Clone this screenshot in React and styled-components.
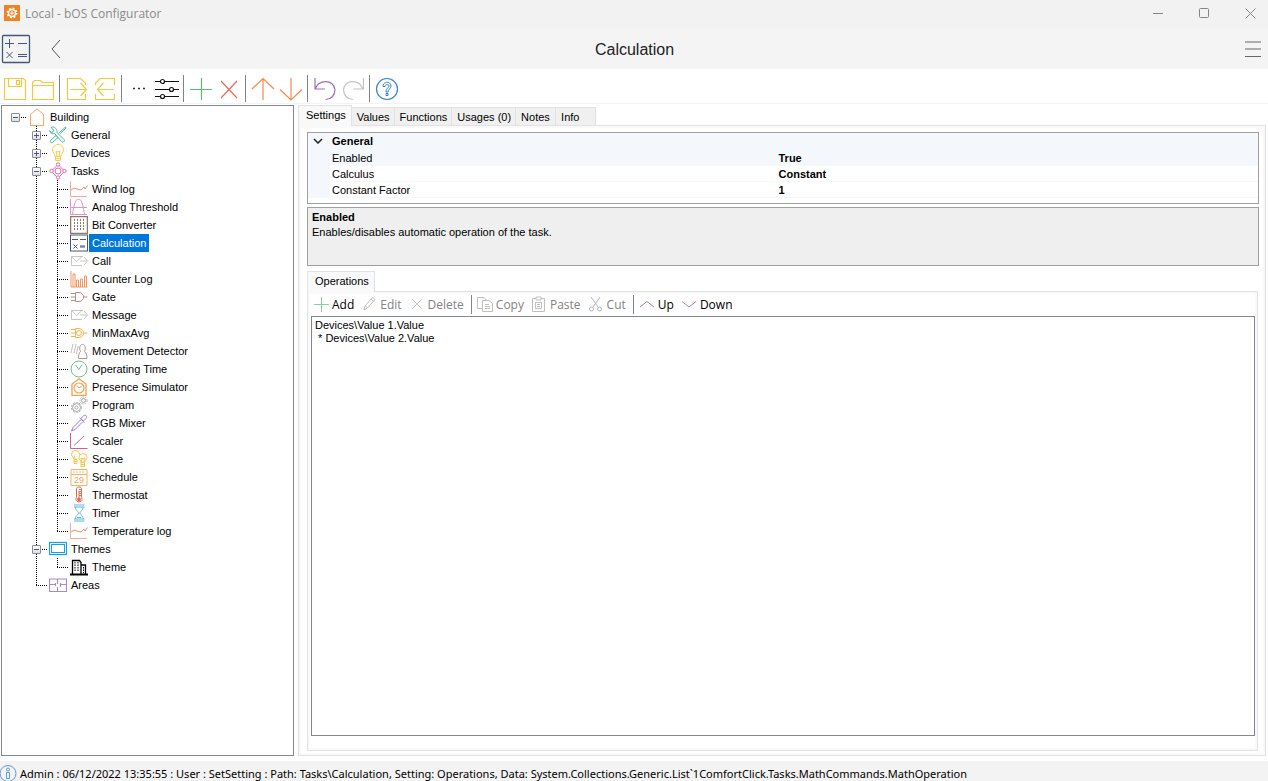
import React from 'react';
import styled, { createGlobalStyle } from 'styled-components';

const sans = '"Liberation Sans", Arial, sans-serif';
const ui = '"Open Sans", "Segoe UI", sans-serif';

const GlobalStyle = createGlobalStyle`
    * {
        box-sizing: border-box;
    }

    body {
        margin: 0;
        background: #fff;
        color: #000;
        font-family: ${sans};
        font-size: 11px;
    }

    button {
        border: 0;
        padding: 0;
        background: none;
        color: inherit;
        font: inherit;
    }

    ul {
        list-style: none;
        margin: 0;
        padding: 0;
    }
`

const Window = styled.div`
    height: 100vh;
    display: flex;
    flex-direction: column;
    overflow: hidden;
`

const TitleBar = styled.div`
    flex: none;
    height: 29px;
    padding: 0 0 3px 4px;
    display: flex;
    align-items: center;
    background: #f2f2f2;
    color: #8a8a8a;
    font-family: ${ui};
    font-size: 12px;
`

const AppName = styled.span`
    flex: 1;
    padding-left: 5px;
`

const WindowButton = styled.button`
    width: 46px;
    height: 26px;
    display: flex;
    align-items: center;
    justify-content: center;
`

const WindowButtons = styled.div`
    display: flex;
    margin-right: -5px;
`

const Header = styled.header`
    flex: none;
    height: 40px;
    padding: 0 0 0 1px;
    display: grid;
    grid-template-columns: 1fr auto 1fr;
    align-items: center;
    background: #f4f4f4;
`

const HeaderSide = styled.div`
    display: flex;
    align-items: center;
    gap: 17px;
    padding-right: 7px;
    justify-content: ${props => props.$end ? 'flex-end' : 'flex-start'};

    button {
        display: flex;
    }
`

const Title = styled.h1`
    margin: 0;
    padding-top: 2px;
    font-size: 16px;
    font-weight: normal;
    color: #222;
`

const Toolbar = styled.div`
    flex: none;
    height: 35px;
    padding: 6px 0 0 1px;
    display: flex;
    border-bottom: 1px solid #f3f3f3;
`

const ToolButton = styled.button`
    width: 28px;
    height: 28px;
    display: flex;
    align-items: center;
    justify-content: center;
`

const Separator = styled.span`
    width: 1px;
    height: ${props => props.$small ? '19px' : '27px'};
    margin: ${props => props.$small ? '0 5px 0 0' : '0 3px 0 2px'};
    background: #80838a;
`

const Main = styled.main`
    flex: 1;
    min-height: 0;
    padding: 1px 2px 5px 1px;
    display: flex;
    gap: 4px;
`

const TreePanel = styled.nav`
    flex: none;
    width: 293px;
    padding: 2px 3px;
    border: 1px solid #828790;
    overflow: hidden;
`

const TreeRow = styled.div`
    height: 18px;
    display: flex;
    align-items: stretch;
    cursor: default;

    svg {
        flex: none;
        margin: 0 1px 0 2px;
    }
`

const dotsDown = 'repeating-linear-gradient(180deg, #000 0 1px, transparent 1px 2px)';
const dotsAcross = 'repeating-linear-gradient(90deg, #000 0 1px, transparent 1px 2px)';

const down = {
    full: `${dotsDown} 10px 0 / 1px 18px no-repeat`,
    half: `${dotsDown} 10px 0 / 1px 10px no-repeat`,
}

const Guide = styled.span`
    flex: none;
    width: 21px;
    padding: 5px 0 0 6px;
    background: ${props => [
        props.$down && down[props.$down],
        props.$across && `${dotsAcross} 10px 9px / 11px 1px no-repeat`,
    ].filter(Boolean).join(', ') || 'none'};
`

const Expander = styled.button`
    width: 9px;
    height: 9px;
    display: block;
    border: 1px solid #8c8c8c;
    border-radius: 1px;
    background:
        linear-gradient(#3a56b0, #3a56b0) center / 5px 1px no-repeat,
        ${props => props.$open ? '' : 'linear-gradient(#3a56b0, #3a56b0) center / 1px 5px no-repeat,'}
        linear-gradient(#fff, #dedede);
`

const TreeLabel = styled.span`
    padding: 0 3px;
    line-height: 18px;
    white-space: nowrap;
    background: ${props => props.$selected ? '#0078d7' : 'none'};
    color: ${props => props.$selected ? '#fff' : '#000'};
`

const Content = styled.section`
    flex: 1;
    min-width: 0;
    display: flex;
    flex-direction: column;
`

const Tabs = styled.div`
    flex: none;
    display: flex;
    align-items: flex-end;
    height: 20px;
`

const Tab = styled.button`
    height: ${props => props.$active ? '21px' : '18px'};
    min-width: 40px;
    margin-bottom: ${props => props.$active ? '-1px' : '0'};
    padding: ${props => props.$active ? '0 5px 2px 7px' : '0 4px 0 5px'};
    border: 1px solid #e2e2e2;
    border-bottom: 0;
    border-left-width: ${props => props.$active ? '1px' : '0'};
    background: ${props => props.$active ? '#f9f9f9' : '#f0f0f0'};
    position: relative;
    text-align: left;
    white-space: nowrap;
`

const TabPage = styled.div`
    flex: 1;
    min-height: 0;
    padding: 6px 6px 4px 8px;
    display: flex;
    flex-direction: column;
    border: 1px solid #e2e2e2;
    box-shadow: inset 0 0 0 2px #f9f9f9;
`

const PropertyBox = styled.div`
    flex: none;
    height: 72px;
    border: 1px solid #a0a0a0;
`

const PropertyTable = styled.table`
    width: 100%;
    table-layout: fixed;
    border-collapse: collapse;

    td,
    th {
        height: 16px;
        padding: 1px 2px 0;
        line-height: 14px;
        text-align: left;
        border-bottom: 1px solid #f4f7fc;
    }

    th {
        font-weight: normal;
    }

    td:last-child {
        font-weight: bold;
    }
`

const PropertyRow = styled.tr`
    background: ${props => props.$shaded ? '#f4f7fc' : '#fff'};

    td:first-child {
        background: #f4f7fc;
    }
`

const Category = styled.th`
    && {
        font-weight: bold;
    }
`

const Fold = styled.button`
    width: 15px;
    height: 14px;
    display: flex;
    align-items: center;
    justify-content: center;
`

const Help = styled.div`
    flex: none;
    height: 59px;
    margin: 3px 0 5px;
    padding: 2px 4px;
    border: 1px solid #a0a0a0;
    background: #efefef;
    line-height: 15px;
`

const SubPage = styled.div`
    flex: 1;
    min-height: 0;
    margin-right: 1px;
    padding: 1px 2px 14px 3px;
    display: flex;
    flex-direction: column;
    border: 1px solid #e2e2e2;
    box-shadow: inset 0 0 0 2px #fafafa;
`

const Commands = styled.div`
    flex: none;
    height: 23px;
    padding: 1px 0 2px 2px;
    display: flex;
    align-items: center;
    font-family: ${ui};
    font-size: 12px;
`

const Command = styled.button`
    height: 19px;
    margin-right: 7px;
    display: flex;
    align-items: center;
    gap: 3px;
    white-space: nowrap;
    color: ${props => props.disabled ? '#838383' : '#000'};
`

const Operations = styled.ul`
    flex: 1;
    min-height: 0;
    border: 1px solid #828790;
    overflow: auto;
    background: #fff;

    li {
        padding: 0 3px;
        line-height: 13px;
        white-space: pre;
    }

    li:first-child {
        padding-top: 2px;
    }
`

const StatusBar = styled.footer`
    flex: none;
    height: 20px;
    padding-top: 3px;
    display: flex;
    gap: 3px;
    background: #f3f3f3;
    font-family: "Noto Sans", "Segoe UI", sans-serif;
    font-size: 11px;
    line-height: 19px;
    white-space: nowrap;
    overflow: hidden;

    svg {
        flex: none;
    }
`

const glyphs = {
    building: ['#f3ab5c', <path d="M2.500 17.500V6.500L9 .8l6.500 5.700v11z" />],
    tools: ['#4cb892', <path d="M2 1.500 4.500 4l-.5 2-2 .5L.8 4.500C.8 7 3 8.500 5.500 7.500l7 8c1.500 1.800 4-.3 2.500-2L8 6.500C8.500 3.500 6 .8 3.500 1zM16.500 1l-6 5.500 1 1L17 2zM7 9.500l-5.500 5c-1 1 .8 3 2 2L9 11.500z" />],
    bulb: ['#f7cd4f', <path d="M6 12.500c0-3-2.500-3.500-2.500-6.500a5.500 5.500 0 0 1 11 0c0 3-2.500 3.500-2.500 6.500zM6 14.500h6M6.500 12.500v4h5v-4M8 12 7 7l2 1 2-1-1 5" />],
    tasks: ['#e868a8', <><circle cx="9" cy="9" r="3" /><circle cx="9" cy="2.500" r="1.700" /><circle cx="9" cy="15.500" r="1.700" /><circle cx="2.500" cy="9" r="1.700" /><circle cx="15.500" cy="9" r="1.700" /><path d="m7.500 4-4 4M10.500 4l4 4M3.500 10.500l4 4M14.500 10.500l-4 4" /></>],
    log: ['#ee8a80', <><path d="M.5 1v15.500H17" stroke="#f3aaa0" /><path d="m1 10 3-2 3 1 4 1 3-3 1 2 2.500-3.500" /></>],
    analog: ['#dd94c8', <path d="M.5 1v15.500H17M.5 9.500H17M2.500 16C5 1 6.500 1.500 8.500 1.500S12 1 14.500 16" />],
    bits: ['#92796a', <><rect x=".5" y=".5" width="17" height="17" strokeWidth="1.500" /><path d="M4.500 3v12M7.500 3v12M10.500 3v12M13.500 3v12" strokeDasharray="2 1" /></>],
    calc: ['#46567c', <><rect x=".5" y="1" width="17" height="16" /><path d="M2 5.500h6M10 5.500h6M10 12h5M10 13h5M3.500 10.500l4 4M7.500 10.500l-4 4" /></>],
    mail: ['#c6c6c6', <path d="M12 13.500H1.500v-9H13M1.500 4.500l5 5 5.500-5M10 9h7M14 5l3.500 4-3.500 4" />],
    counter: ['#f2955f', <path d="M1 1v16h16.500M3 17V4h2v13M6.500 17v-7h2v7M10.500 17V9h2v8M14.500 17V6h2v11" />],
    gate: ['#bb8a84', <path d="M5.500 4.500h3.500c6 0 6 9 0 9H5.500zM1 5.500h4.500M1 9h4.500M1 12.500h4.500M13.500 9h4" />],
    minmax: ['#f4b54e', <><path d="M5.500 4.500h3.500c6 0 6 9 0 9H5.500zM1 5.500h4.500M1 9h4.500M1 12.500h4.500M13.500 9h4" /><circle cx="9" cy="9" r="2.500" /></>],
    motion: ['#a89b94', <><path d="M8.500 16.500c0-4 .5-5.500 2-7-1.500-3-1-7 2-7s3.500 4 2 7c1.500 1.500 2.500 3 2.500 7z" /><path d="m1 11 2-9M4 11l2-9M6.500 12 8 4" stroke="#c4bcb6" /></>],
    clock: ['#72c08c', <><circle cx="9" cy="9" r="8" /><path d="M5.500 5 9 9.500l3-5" /></>],
    presence: ['#f2a04c', <><path d="M2 17.500V6l7-5.200L16 6v11.500z" strokeWidth="1.300" /><circle cx="9" cy="10" r="5" strokeWidth="1.200" /><path d="m7 7.500 2 2.500 3-2" /></>],
    gears: ['#a8a8a8', <><circle cx="6.500" cy="11.500" r="5" strokeDasharray="2 1.200" /><circle cx="6.500" cy="11.500" r="4" /><circle cx="6.500" cy="11.500" r="1.500" /><circle cx="13.500" cy="4.500" r="3.500" strokeDasharray="1.500 1" /><circle cx="13.500" cy="4.500" r="2" /></>],
    dropper: ['#9a7bc8', <path d="M11 4.500c2-2.500 3.500-4 5-3s0 3.500-2.500 5.500zM9.500 4l5 4.500M10.500 6 3 13.500 1.500 17l3.500-1.500L12.500 8" />],
    scaler: ['#dd5c90', <><path d="M.5 1v15.500h17" /><path d="M4 13.500 14 4" /></>],
    scene: ['#f7c545', <path d="M4 9.500C4 7.500 1.500 6.500 1.500 4.500a4 4 0 0 1 8 0M4 9.500h3v4H4zM4 11.500h3M5 9 4.500 5.500M11 12.500c0-2-2-3-2-5a4 4 0 0 1 8 0c0 2-2.500 3-2.500 5zM11 12.500v4h3.500v-4M11 14.500h3.500M12 12l-1-4 2 1 2-1-1 4" />],
    calendar: ['#f4b468', <><path d="M1 1.500h16v16H1zM1 6.500h16" /><path d="M3 4h11" strokeDasharray="2 1" /><text x="4" y="15" fontSize="9" fill="#f4a458" stroke="none" fontFamily="Liberation Sans">29</text></>],
    thermo: ['#e06a50', <><path d="M6.500 11V2.500c0-2 5-2 5 0V11c3 6.500-8 6.500-5 0z" /><path d="M9 5v9M11 3.500H9M11 5.500H9M11 7.500H9M11 9.500H9" /><circle cx="9" cy="13.500" r="1.500" fill="#e06a50" /></>],
    timer: ['#56b8e0', <path d="M4 1h10.500M4 3h10.500M4 15h10.500M4 17h10.500M5.500 3c0 4 3 4 3 6s-3 2-3 6M13 3c0 4-3 4-3 6s3 2 3 6M7 13.500h4" />],
    themes: ['#1ba0e0', <><rect x=".5" y="2.500" width="17" height="12" strokeWidth="1.300" /><rect x="2.500" y="4.500" width="13" height="8" /></>],
    city: ['#000', <><path d="M2.500 16V2.500h7l1.500 2V16M11 7h4.500v9" strokeWidth="1.300" /><path d="M0 16.500h18" strokeWidth="2" /><path d="M5 4v10M8 4v10M13.500 9v6" strokeDasharray="1.500 1" /></>],
    areas: ['#a48cc8', <path d="M.5 3v12.500h17V3zM.5 8.500h6M8.500 3v5M8.500 11v4.500M11.500 8.500h6M11.500 7v4M6.500 7v3" strokeWidth="1.200" />],
}

const Glyph = ({ name }) => {
    const [color, shape] = glyphs[name];
    return (
        <svg width="18" height="18" viewBox="0 0 18 18" fill="none" stroke={color} aria-hidden="true">{shape}</svg>
    )
}

const tools = [
    ['Save', '#f5c742', <path d="M1.500 1.500h19l2 2v19h-21zM5.500 1.500v8h13v-8M13.500 3.500h3v4h-3z" />],
    ['Open', '#f5c742', <path d="M1.500 22.500v-17l2-2h6l2 2h11v17zM1.500 8.500h21" />],
    null,
    ['Export', '#f5c742', <path d="M20.500 8V6l-5-4.500h-13v21h18V17M5 12.500h16M15.500 6l6 6.500-6 6.500" />],
    ['Import', '#f5c742', <path d="M21.500 8V1.500H7L2.500 6v2M2.500 17v5.500h19V17M21 12.500H5M10.500 6l-6 6.500 6 6.500" />],
    null,
    ['More', '#333', <path d="M6 11.500h2M11 11.500h2M16 11.500h2" strokeWidth="1.500" />],
    ['Options', '#111', <path d="M0 4.500h5M10 4.500h14M0 12.500h14M19 12.500h5M0 19.500h5M10 19.500h14M5.500 4.500a2 2 0 1 0 4 0 2 2 0 1 0-4 0M14.500 12.500a2 2 0 1 0 4 0 2 2 0 1 0-4 0M5.500 19.500a2 2 0 1 0 4 0 2 2 0 1 0-4 0" />],
    null,
    ['Add', '#5cba72', <path d="M1 12.500h22M12.500 1v22" />],
    ['Delete', '#ea6a55', <path d="m4 4 16 17M20 4 4 21" />],
    null,
    ['Move up', '#f28a4c', <path d="M12 23V2M1 12 12 1.500 23 12" />],
    ['Move down', '#f28a4c', <path d="M12 1v21M1 12.500 12 23l11-10.500" />],
    null,
    ['Undo', '#9b6fc0', <path d="M2 1v11h10M2 12C6 2 20 2 22 12.500c0 6-4 10-9.500 10" />],
    ['Redo', '#c4c4c4', <path d="M22.500 1v11h-10M22 12C18 2 4 2 2.500 12.500c0 6 4 10 9.500 10" />],
    null,
    ['Help', '#2f86c8', <><circle cx="12" cy="12" r="10.500" /><path d="M8 9.500C8 4 16 4 16 9c0 3-3 3-3 6h-2c0-4 3-4 3-6s-4-2-4 .5zM11 16.500h2v2h-2z" strokeWidth="1" /></>],
]

const tree = [
    { depth: 0, icon: 'building', label: 'Building', open: true },
    { depth: 1, icon: 'tools', label: 'General', open: false },
    { depth: 1, icon: 'bulb', label: 'Devices', open: false },
    { depth: 1, icon: 'tasks', label: 'Tasks', open: true },
    { depth: 2, icon: 'log', label: 'Wind log' },
    { depth: 2, icon: 'analog', label: 'Analog Threshold' },
    { depth: 2, icon: 'bits', label: 'Bit Converter' },
    { depth: 2, icon: 'calc', label: 'Calculation', selected: true },
    { depth: 2, icon: 'mail', label: 'Call' },
    { depth: 2, icon: 'counter', label: 'Counter Log' },
    { depth: 2, icon: 'gate', label: 'Gate' },
    { depth: 2, icon: 'mail', label: 'Message' },
    { depth: 2, icon: 'minmax', label: 'MinMaxAvg' },
    { depth: 2, icon: 'motion', label: 'Movement Detector' },
    { depth: 2, icon: 'clock', label: 'Operating Time' },
    { depth: 2, icon: 'presence', label: 'Presence Simulator' },
    { depth: 2, icon: 'gears', label: 'Program' },
    { depth: 2, icon: 'dropper', label: 'RGB Mixer' },
    { depth: 2, icon: 'scaler', label: 'Scaler' },
    { depth: 2, icon: 'scene', label: 'Scene' },
    { depth: 2, icon: 'calendar', label: 'Schedule' },
    { depth: 2, icon: 'thermo', label: 'Thermostat' },
    { depth: 2, icon: 'timer', label: 'Timer' },
    { depth: 2, icon: 'log', label: 'Temperature log', last: true },
    { depth: 1, icon: 'themes', label: 'Themes', open: true },
    { depth: 2, icon: 'city', label: 'Theme', last: true },
    { depth: 1, icon: 'areas', label: 'Areas', last: true },
]

const commands = [
    ['Add', '#86cf96', <path d="M1 8.500h15M8.500 1v15" />, true],
    ['Edit', '#bdbdbd', <path d="m3 14 1-4 7.500-8.500 2.500 2L6.500 12zM4.500 10l2 2M10 3l2.500 2.500" />],
    ['Delete', '#c4c4c4', <path d="m3 3 10 10M13 3 3 13" />],
    null,
    ['Copy', '#c0c0c0', <path d="M5 12.500H.5v-11H7l2.500 2.500M5.500 4.500H12l3.500 3v8h-10zM8 8.500h4M8 10.500h5M8 12.500h5" />],
    ['Paste', '#c0c0c0', <path d="M5 2.500H1.500v13h12v-13H10M5 1h5v3H5zM4.500 6.500h6v6h-6zM6 8.500h3M6 10.500h3" />],
    ['Cut', '#b4b4b4', <><path d="m3 1 7 10M12 1 5 11" /><circle cx="3.500" cy="13" r="2" /><circle cx="11.500" cy="13" r="2" /></>],
    null,
    ['Up', '#a583c6', <path d="m1 11 7-5.500 7 5.500" />, true],
    ['Down', '#a583c6', <path d="m1 5.500 7 5.500 7-5.500" />, true],
]

const TreeItem = ({ item }) => {
    const expandable = item.open !== undefined;
    let elbow = null;
    if (item.depth > 0){
        elbow = item.last ? 'half' : 'full';
    }

    return (
        <TreeRow role="treeitem" aria-selected={!!item.selected}>
            {item.depth > 0 && <Guide />}
            {item.depth > 1 && <Guide $down="full" />}
            <Guide $down={elbow} $across>
                {expandable && <Expander $open={item.open} aria-label={`Toggle ${item.label}`} />}
            </Guide>
            <Glyph name={item.icon} />
            <TreeLabel $selected={item.selected}>{item.label}</TreeLabel>
        </TreeRow>
    )
}

const App = () => (
    <Window>
        <GlobalStyle />
        <TitleBar>
            <svg width="16" height="16" viewBox="0 0 16 16" aria-hidden="true">
                <rect width="16" height="16" fill="#ee8322" />
                <g fill="none" stroke="#fff">
                    <circle cx="8" cy="8" r="4.500" strokeDasharray="1.800 1.730" strokeWidth="2" />
                    <circle cx="8" cy="8" r="3.500" strokeWidth="1.500" />
                    <path d="M7 7h2v2H7z" />
                </g>
            </svg>
            <AppName>Local - bOS Configurator</AppName>
            <WindowButtons>
                <WindowButton aria-label="Minimize">
                    <svg width="11" height="11" fill="none" stroke="#858585"><path d="M0 5.500h10" /></svg>
                </WindowButton>
                <WindowButton aria-label="Maximize">
                    <svg width="11" height="11" fill="none" stroke="#858585"><rect x=".5" y=".5" width="9" height="9" rx="1" /></svg>
                </WindowButton>
                <WindowButton aria-label="Close">
                    <svg width="11" height="11" fill="none" stroke="#858585"><path d="m.5.5 10 10M10.500.5l-10 10" /></svg>
                </WindowButton>
            </WindowButtons>
        </TitleBar>

        <Header>
            <HeaderSide>
                <svg width="30" height="30" viewBox="0 0 30 30" fill="none" stroke="#46567c" aria-hidden="true">
                    <rect x="1.500" y="1.500" width="27" height="27" rx="1" strokeWidth="1.300" />
                    <path d="M4 9.500h9M8.500 5v9M17 9.500h9M17 20.500h9M17 22.500h9M5.500 18l6 6M11.500 18l-6 6" />
                </svg>
                <button aria-label="Back">
                    <svg width="14" height="20" viewBox="0 0 14 20" fill="none" stroke="#555"><path d="M12 1 4 10l8 9" /></svg>
                </button>
            </HeaderSide>
            <Title>Calculation</Title>
            <HeaderSide $end>
                <button aria-label="Menu">
                    <svg width="16" height="16" viewBox="0 0 16 16" fill="none" stroke="#666"><path d="M0 1h16M0 8h16M0 15.500h16" /></svg>
                </button>
            </HeaderSide>
        </Header>

        <Toolbar role="toolbar">
            {tools.map((tool, i) => tool ? (
                <ToolButton key={i} aria-label={tool[0]}>
                    <svg width="24" height="24" viewBox="0 0 24 24" fill="none" stroke={tool[1]} strokeWidth="1.200">{tool[2]}</svg>
                </ToolButton>
            ) : <Separator key={i} />)}
        </Toolbar>

        <Main>
            <TreePanel role="tree" aria-label="Project">
                {tree.map((item, i) => <TreeItem key={i} item={item} />)}
            </TreePanel>

            <Content>
                <Tabs role="tablist">
                    <Tab role="tab" aria-selected="true" $active>Settings</Tab>
                    <Tab role="tab">Values</Tab>
                    <Tab role="tab">Functions</Tab>
                    <Tab role="tab">Usages (0)</Tab>
                    <Tab role="tab">Notes</Tab>
                    <Tab role="tab">Info</Tab>
                </Tabs>
                <TabPage>
                    <PropertyBox>
                        <PropertyTable>
                            <colgroup>
                                <col style={{ width: 22 }} />
                                <col style={{ width: '47%' }} />
                                <col />
                            </colgroup>
                            <tbody>
                                <PropertyRow $shaded>
                                    <td>
                                        <Fold aria-label="Collapse General">
                                            <svg width="10" height="6" viewBox="0 0 10 6" fill="none" stroke="#222" strokeWidth="1.500"><path d="m1 1 4 4 4-4" /></svg>
                                        </Fold>
                                    </td>
                                    <Category colSpan="2">General</Category>
                                </PropertyRow>
                                <PropertyRow $shaded><td /><th scope="row">Enabled</th><td>True</td></PropertyRow>
                                <PropertyRow><td /><th scope="row">Calculus</th><td>Constant</td></PropertyRow>
                                <PropertyRow><td /><th scope="row">Constant Factor</th><td>1</td></PropertyRow>
                            </tbody>
                        </PropertyTable>
                    </PropertyBox>
                    <Help>
                        <b>Enabled</b>
                        <div>Enables/disables automatic operation of the task.</div>
                    </Help>

                    <Tabs role="tablist">
                        <Tab role="tab" aria-selected="true" $active>Operations</Tab>
                    </Tabs>
                    <SubPage>
                        <Commands role="toolbar">
                            {commands.map((command, i) => command ? (
                                <Command key={i} disabled={!command[3]}>
                                    <svg width="16" height="16" viewBox="0 0 16 16" fill="none" stroke={command[1]}>{command[2]}</svg>
                                    {command[0]}
                                </Command>
                            ) : <Separator key={i} $small />)}
                        </Commands>
                        <Operations>
                            <li>Devices\Value 1.Value</li>
                            <li>{' * Devices\\Value 2.Value'}</li>
                        </Operations>
                    </SubPage>
                </TabPage>
            </Content>
        </Main>

        <StatusBar>
            <svg width="17" height="19" viewBox="0 0 17 19" fill="none" stroke="#5b9bd0" aria-hidden="true">
                <circle cx="8" cy="9.500" r="8" />
                <circle cx="8" cy="5.500" r="1.500" />
                <path d="M6.500 8.500h3v6h-3z" />
            </svg>
            <span>Admin : 06/12/2022 13:35:55 : User : SetSetting : Path: Tasks\Calculation, Setting: Operations, Data: System.Collections.Generic.List`1ComfortClick.Tasks.MathCommands.MathOperation</span>
        </StatusBar>
    </Window>
)

export default App;
